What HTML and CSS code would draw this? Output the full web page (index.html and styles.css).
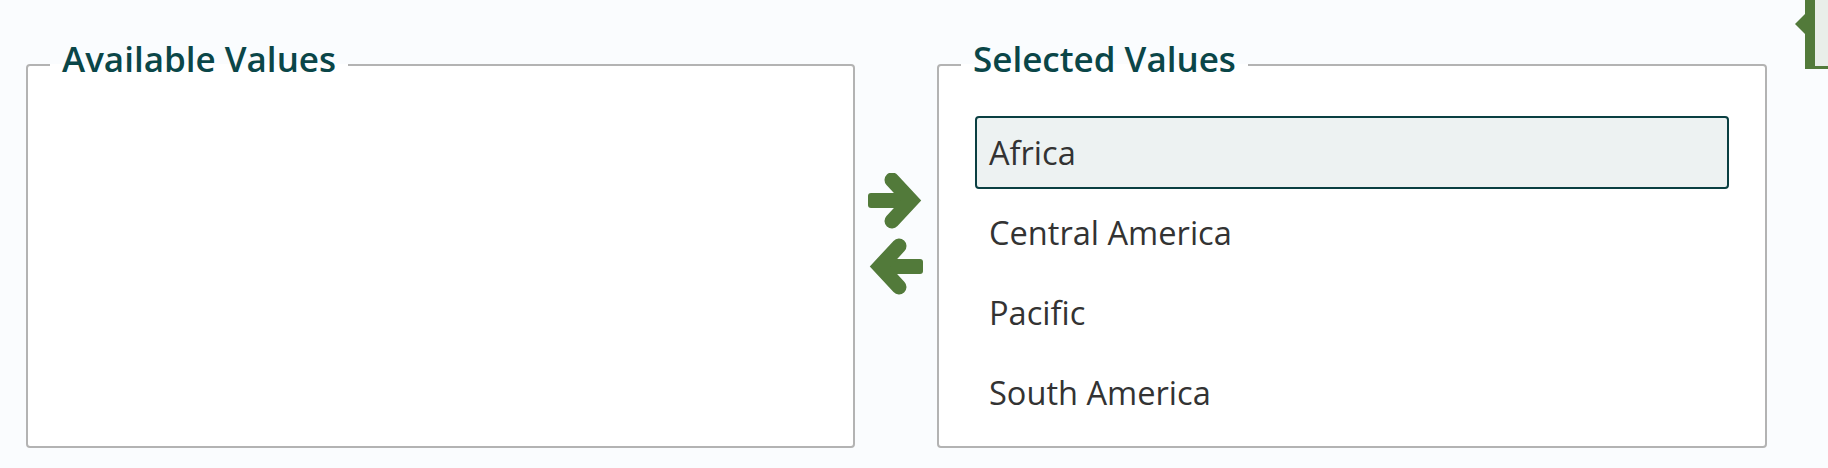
FILE: index.html
```html
<!DOCTYPE html>
<html lang="en">
<head>
<meta charset="utf-8">
<title>Values picker</title>
<link rel="stylesheet" href="styles.css">
</head>
<body>
<div class="picker">
  <fieldset class="pane">
    <legend class="pane-title">Available Values</legend>
    <ul class="value-list"></ul>
  </fieldset>

  <div class="movers">
    <button class="mover" type="button" aria-label="Add">
      <svg width="56" height="58" viewBox="0 0 56 58">
        <rect x="0" y="20" width="44" height="15" rx="3" fill="#527a3a"/>
        <polyline points="24,7 43,27.5 24,48" fill="none" stroke="#527a3a" stroke-width="15" stroke-linecap="round" stroke-linejoin="miter"/>
      </svg>
    </button>
    <button class="mover" type="button" aria-label="Remove">
      <svg width="56" height="58" viewBox="0 0 56 58">
        <rect x="11" y="21" width="44" height="15" rx="3" fill="#527a3a"/>
        <polyline points="31,8 12,28.5 31,49" fill="none" stroke="#527a3a" stroke-width="15" stroke-linecap="round" stroke-linejoin="miter"/>
      </svg>
    </button>
  </div>

  <fieldset class="pane">
    <legend class="pane-title">Selected Values</legend>
    <ul class="value-list">
      <li class="value-item is-active">Africa</li>
      <li class="value-item">Central America</li>
      <li class="value-item">Pacific</li>
      <li class="value-item">South America</li>
    </ul>
  </fieldset>
</div>

<div class="side-tab">
  <span class="side-tab-arrow"></span>
</div>
</body>
</html>
```

FILE: styles.css
```css
* {
  box-sizing: border-box;
}

html, body {
  margin: 0;
  height: 100%;
}

body {
  background: #fafcfe;
  font-family: "Open Sans", "Noto Sans", "Liberation Sans", sans-serif;
  color: #333333;
  overflow: hidden;
}

.picker {
  display: grid;
  grid-template-columns: 829px 82px 830px;
  padding: 34px 0 0 26px;
  height: 448px;
}

.pane {
  margin: 0;
  min-width: 0;
  border: 2px solid #b3b3b3;
  border-radius: 4px;
  background: #ffffff;
  padding: 0;
}

.pane-title {
  margin-left: 22px;
  padding: 0 12px 12px;
  font-size: 35px;
  font-weight: 600;
  line-height: 49px;
  color: #0a4648;
}

.value-list {
  list-style: none;
  margin: 21px 0 0;
  padding: 0 36px;
}

.value-item {
  border: 2px solid transparent;
  border-radius: 4px;
  padding: 13px 12px 12px;
  margin-bottom: 7px;
  font-size: 32.6px;
  line-height: 44px;
  color: #333333;
}

.value-item.is-active {
  background: #edf2f2;
  border-color: #0a3f42;
}

.movers {
  display: flex;
  flex-direction: column;
  align-items: center;
  padding-top: 139px;
  gap: 7px;
}

.mover {
  border: 0;
  background: none;
  padding: 0;
  margin: 0;
  display: block;
  cursor: pointer;
}

.mover svg {
  display: block;
}

.side-tab {
  position: absolute;
  top: 0;
  right: 0;
  width: 23px;
  height: 69px;
  background: #e9eee9;
  border-left: 10px solid #527a3a;
  border-bottom: 3px solid #527a3a;
}

.side-tab-arrow {
  position: absolute;
  left: -20px;
  top: 14px;
  width: 0;
  height: 0;
  border-top: 10px solid transparent;
  border-bottom: 10px solid transparent;
  border-right: 10px solid #527a3a;
}
```
